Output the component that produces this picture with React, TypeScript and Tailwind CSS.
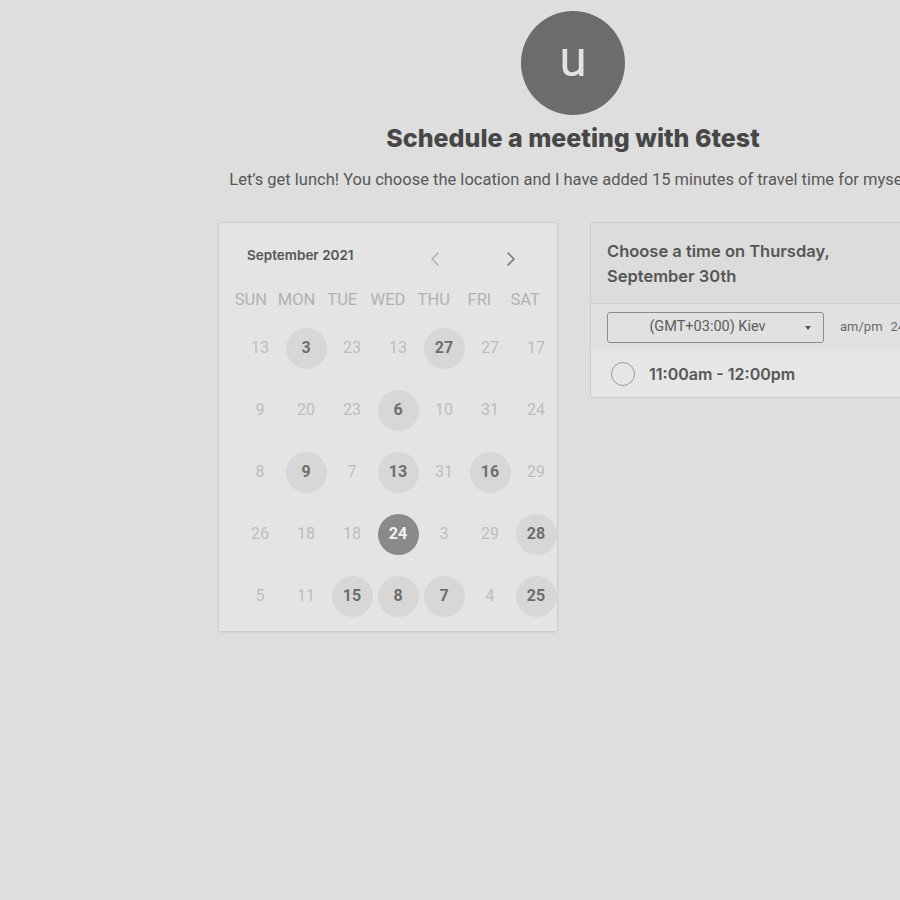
const weekDays = ["SUN", "MON", "TUE", "WED", "THU", "FRI", "SAT"];

type Day = { n: number; on?: boolean; sel?: boolean };

const weeks: Day[][] = [
  [{ n: 13 }, { n: 3, on: true }, { n: 23 }, { n: 13 }, { n: 27, on: true }, { n: 27 }, { n: 17 }],
  [{ n: 9 }, { n: 20 }, { n: 23 }, { n: 6, on: true }, { n: 10 }, { n: 31 }, { n: 24 }],
  [{ n: 8 }, { n: 9, on: true }, { n: 7 }, { n: 13, on: true }, { n: 31 }, { n: 16, on: true }, { n: 29 }],
  [{ n: 26 }, { n: 18 }, { n: 18 }, { n: 24, sel: true }, { n: 3 }, { n: 29 }, { n: 28, on: true }],
  [{ n: 5 }, { n: 11 }, { n: 15, on: true }, { n: 8, on: true }, { n: 7, on: true }, { n: 4 }, { n: 25, on: true }],
];

function Chevron({ dir, className }: { dir: "left" | "right"; className?: string }) {
  return (
    <svg width="10" height="16" viewBox="0 0 10 16" fill="none" className={className}>
      <path
        d={dir === "left" ? "M8 2 L2 8 L8 14" : "M2 2 L8 8 L2 14"}
        stroke="currentColor"
        strokeWidth="1.6"
        strokeLinecap="round"
        strokeLinejoin="round"
      />
    </svg>
  );
}

function DayCell({ day }: { day: Day }) {
  if (day.sel) {
    return (
      <div className="flex h-[62px] items-center justify-center">
        <span className="flex h-[41px] w-[41px] items-center justify-center rounded-full bg-[#8a8a8a] text-[16px] font-bold text-[#f2f2f2]">
          {day.n}
        </span>
      </div>
    );
  }
  if (day.on) {
    return (
      <div className="flex h-[62px] items-center justify-center">
        <span className="flex h-[41px] w-[41px] items-center justify-center rounded-full bg-[#d7d7d7] text-[16px] font-bold text-[#6e6e6e]">
          {day.n}
        </span>
      </div>
    );
  }
  return (
    <div className="flex h-[62px] items-center justify-center text-[16px] text-[#bdbdbd]">{day.n}</div>
  );
}

function Calendar() {
  return (
    <div className="w-[340px] rounded-[2px] border border-[#cdcdcd] bg-[#e4e4e4] pb-[4px] shadow-[0_1px_2px_rgba(0,0,0,0.06)]">
      <div className="flex h-[64px] items-center pl-[28px] pr-[41px]">
        <span className="font-['Inter',sans-serif] text-[13.5px] font-semibold text-[#565656]">September 2021</span>
        <div className="ml-auto flex items-center gap-[66px] pt-[8px]">
          <Chevron dir="left" className="text-[#b0b0b0]" />
          <Chevron dir="right" className="text-[#7a7a7a]" />
        </div>
      </div>
      <div className="mt-[2px] grid grid-cols-7 px-[9px] text-[16.5px] text-[#b2b2b2]">
        {weekDays.map((d) => (
          <div key={d} className="text-center leading-[22px]">
            {d}
          </div>
        ))}
      </div>
      <div className="mt-[6px] grid w-[340px] grid-cols-7 pl-[18px]">
        {weeks.flat().map((d, i) => (
          <DayCell key={i} day={d} />
        ))}
      </div>
    </div>
  );
}

function TimePanel() {
  return (
    <div className="w-[338px] self-start overflow-hidden rounded-[2px] border border-[#cdcdcd] bg-[#e6e6e6]">
      <div className="border-b border-[#cfcfcf] bg-[#dcdcdc] px-[16px] pb-[14px] pt-[16px] font-['Inter',sans-serif] text-[16.5px] font-semibold leading-[25px] text-[#565656]">
        Choose a time on Thursday,
        <br />
        September 30th
      </div>
      <div className="flex h-[46px] items-center bg-[#e1e1e1] pl-[16px]">
        <div className="relative flex h-[31px] w-[217px] items-center justify-center rounded-[3px] border border-[#8c8c8c] pr-[16px] text-[14.5px] text-[#5c5c5c]">
          (GMT+03:00) Kiev
          <span className="absolute right-[12px] top-[13px] h-0 w-0 border-x-[3.5px] border-t-[4px] border-x-transparent border-t-[#555]" />
        </div>
        <span className="ml-[16px] text-[13px] text-[#6a6a6a]">am/pm</span>
        <span className="ml-[8px] text-[13px] text-[#6a6a6a]">24h</span>
      </div>
      <div className="flex h-[47px] items-center gap-[14px] pl-[20px]">
        <span className="h-[24px] w-[24px] rounded-full border-[1.5px] border-[#9a9a9a]" />
        <span className="font-['Inter',sans-serif] text-[16px] font-semibold text-[#575757]">11:00am - 12:00pm</span>
      </div>
    </div>
  );
}

export default function App() {
  return (
    <div className="h-[900px] w-[900px] overflow-hidden bg-[#dedede] font-['Roboto',sans-serif]">
      <div className="flex w-[1146px] flex-col items-center">
        <div className="mt-[11px] flex h-[104px] w-[104px] items-center justify-center rounded-full bg-[#6c6c6c] pb-[8px] text-[50px] text-[#e2e2e2]">
          u
        </div>
        <h1 className="mt-[6px] font-['Inter',sans-serif] text-[25px] font-extrabold leading-[34px] text-[#474747]">
          Schedule a meeting with 6test
        </h1>
        <p className="mt-[15px] whitespace-nowrap text-[16.5px] leading-[20px] text-[#585858]">
          Let’s get lunch! You choose the location and I have added 15 minutes of travel time for myself.
        </p>
        <div className="mt-[32px] flex gap-[32px]">
          <Calendar />
          <TimePanel />
        </div>
      </div>
    </div>
  );
}
